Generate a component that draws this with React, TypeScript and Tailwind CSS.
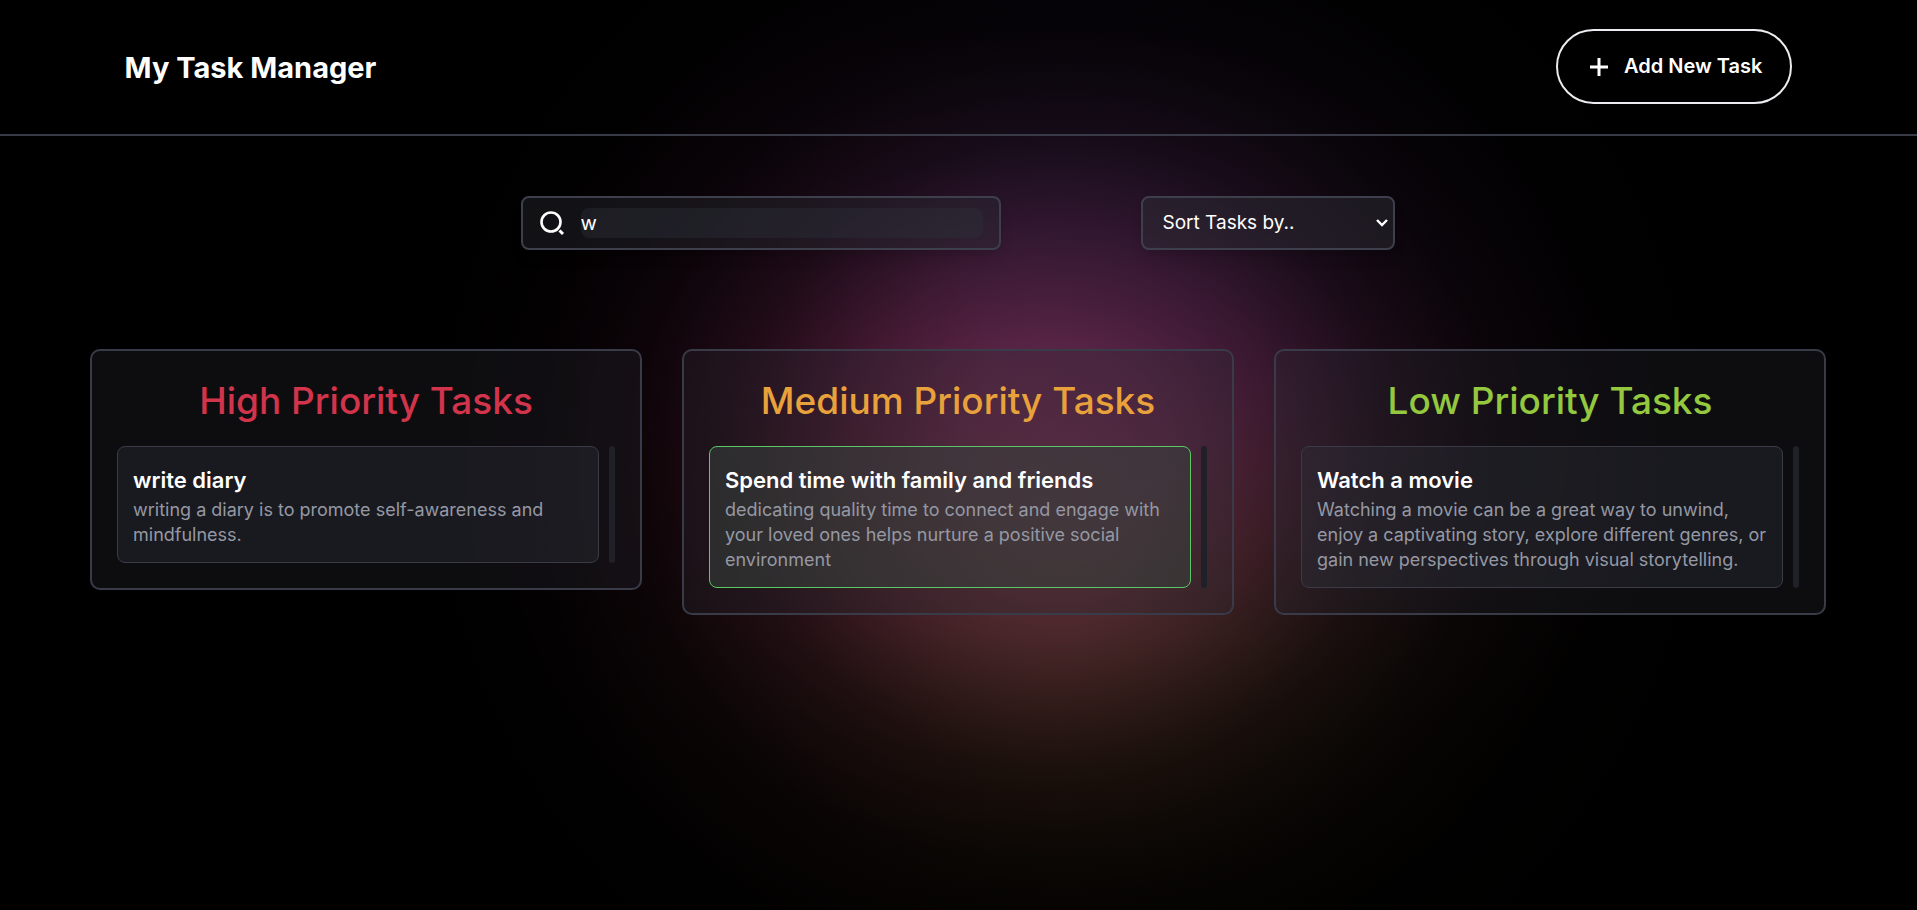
import { useState } from "react";

type Task = { title: string; description: string; highlighted?: boolean };
type Column = { heading: string; color: string; tasks: Task[] };

const columns: Column[] = [
  {
    heading: "High Priority Tasks",
    color: "text-[#d1344b]",
    tasks: [
      {
        title: "write diary",
        description: "writing a diary is to promote self-awareness and mindfulness.",
      },
    ],
  },
  {
    heading: "Medium Priority Tasks",
    color: "text-[#e9a13b]",
    tasks: [
      {
        title: "Spend time with family and friends",
        description:
          "dedicating quality time to connect and engage with your loved ones helps nurture a positive social environment",
        highlighted: true,
      },
    ],
  },
  {
    heading: "Low Priority Tasks",
    color: "text-[#93c83f]",
    tasks: [
      {
        title: "Watch a movie",
        description:
          "Watching a movie can be a great way to unwind, enjoy a captivating story, explore different genres, or gain new perspectives through visual storytelling.",
      },
    ],
  },
];

function TaskCard({ task }: { task: Task }) {
  return (
    <li
      className={
        task.highlighted
          ? "rounded-lg border border-[#5ac865] bg-[#36403c]/57 px-[15px] pt-[18px] pb-[15px]"
          : "rounded-lg border border-[#3a3b47] bg-[#2d2f39]/40 px-[15px] pt-[18px] pb-[15px]"
      }
    >
      <h3 className="text-[22px] leading-[30px] font-semibold text-white">{task.title}</h3>
      <p className="mt-[2px] text-[18px] leading-[25px] text-[#9598a3]">{task.description}</p>
    </li>
  );
}

function PriorityColumn({ column }: { column: Column }) {
  return (
    <section className="min-w-0 flex-1 rounded-[10px] border-2 border-[#3a3b49] bg-[#2b2c34]/30 p-[25px]">
      <h2 className={`text-center text-[37px] leading-[50px] font-medium ${column.color}`}>
        {column.heading}
      </h2>
      <div className="mt-5 flex gap-[10px]">
        <ul className="flex min-w-0 flex-1 flex-col gap-3">
          {column.tasks.map((task) => (
            <TaskCard key={task.title} task={task} />
          ))}
        </ul>
        <div className="w-[6px] rounded-full bg-[#1f2028]" />
      </div>
    </section>
  );
}

export default function App() {
  const [query, setQuery] = useState("w");

  return (
    <div className="min-h-screen bg-black bg-[radial-gradient(circle_at_55.5%_50%,transparent_0px,rgba(0,0,0,0.1)_107px,rgba(0,0,0,0.36)_215px,rgba(0,0,0,0.68)_322px,rgba(0,0,0,0.88)_430px,rgba(0,0,0,0.97)_537px,black_645px),radial-gradient(circle_at_72%_28%,rgba(60,28,66,0.5)_0px,transparent_420px),radial-gradient(circle_at_76%_82%,rgba(56,42,24,0.7)_0px,transparent_400px),linear-gradient(to_right,rgba(105,15,50,0.5)_25%,transparent_52%),linear-gradient(to_bottom,#2c1838_0%,#4c2650_20%,#66294f_38%,#6a3042_58%,#66363a_70%,#502f24_84%,#3e2a16_100%)] font-['Inter',sans-serif]">
      <header className="flex items-center justify-between border-b-2 border-[#393a48] px-[6.5%] pt-[29px] pb-[30px]">
        <h1 className="pt-[2px] text-[29px] leading-[38px] font-bold text-white">My Task Manager</h1>
        <button
          type="button"
          className="flex items-center gap-3 rounded-full border-2 border-[#ececf0] px-[28px] py-[20px] text-[20px] leading-[31px] font-semibold text-white"
        >
          <svg width="26" height="26" viewBox="0 0 26 26" fill="none" stroke="white" strokeWidth="3" aria-hidden="true">
            <path d="M13 4v18M4 13h18" />
          </svg>
          Add New Task
        </button>
      </header>

      <main>
        <div className="flex justify-center gap-[140px] pt-[60px] pr-[2px]">
          <div className="flex h-[54px] w-[480px] items-center rounded-lg border-2 border-[#3e3f4d] bg-[#2b2c34]/40 px-4 shadow-lg">
            <svg width="26" height="26" viewBox="0 0 26 26" fill="none" stroke="white" strokeWidth="2.6" aria-hidden="true">
              <circle cx="12" cy="12" r="9.5" />
              <path d="M20.5 20.5l3.5 3.5" strokeWidth="3" />
            </svg>
            <input
              type="text"
              aria-label="Search tasks"
              value={query}
              onChange={(event) => setQuery(event.target.value)}
              className="ml-4 h-[30px] min-w-0 flex-1 rounded-lg bg-[#2d2f39]/40 text-[20px] leading-[30px] text-white outline-none"
            />
          </div>
          <div className="grid h-[54px] w-[254px]">
            <select
              aria-label="Sort tasks"
              className="col-start-1 row-start-1 appearance-none rounded-lg border-2 border-[#3e3f4d] bg-[#2b2c34]/50 px-[20px] text-[19px] text-white shadow-lg"
            >
              <option>Sort Tasks by..</option>
              <option>Name</option>
              <option>Date</option>
            </select>
            <svg
              width="14"
              height="10"
              viewBox="0 0 14 10"
              fill="none"
              stroke="white"
              strokeWidth="2.4"
              className="pointer-events-none col-start-1 row-start-1 mr-[6px] self-center justify-self-end"
              aria-hidden="true"
            >
              <path d="M2 2l5 5 5-5" />
            </svg>
          </div>
        </div>

        <div className="flex items-start gap-10 pt-[99px] pr-[91px] pb-10 pl-[90px]">
          {columns.map((column) => (
            <PriorityColumn key={column.heading} column={column} />
          ))}
        </div>
      </main>
    </div>
  );
}
